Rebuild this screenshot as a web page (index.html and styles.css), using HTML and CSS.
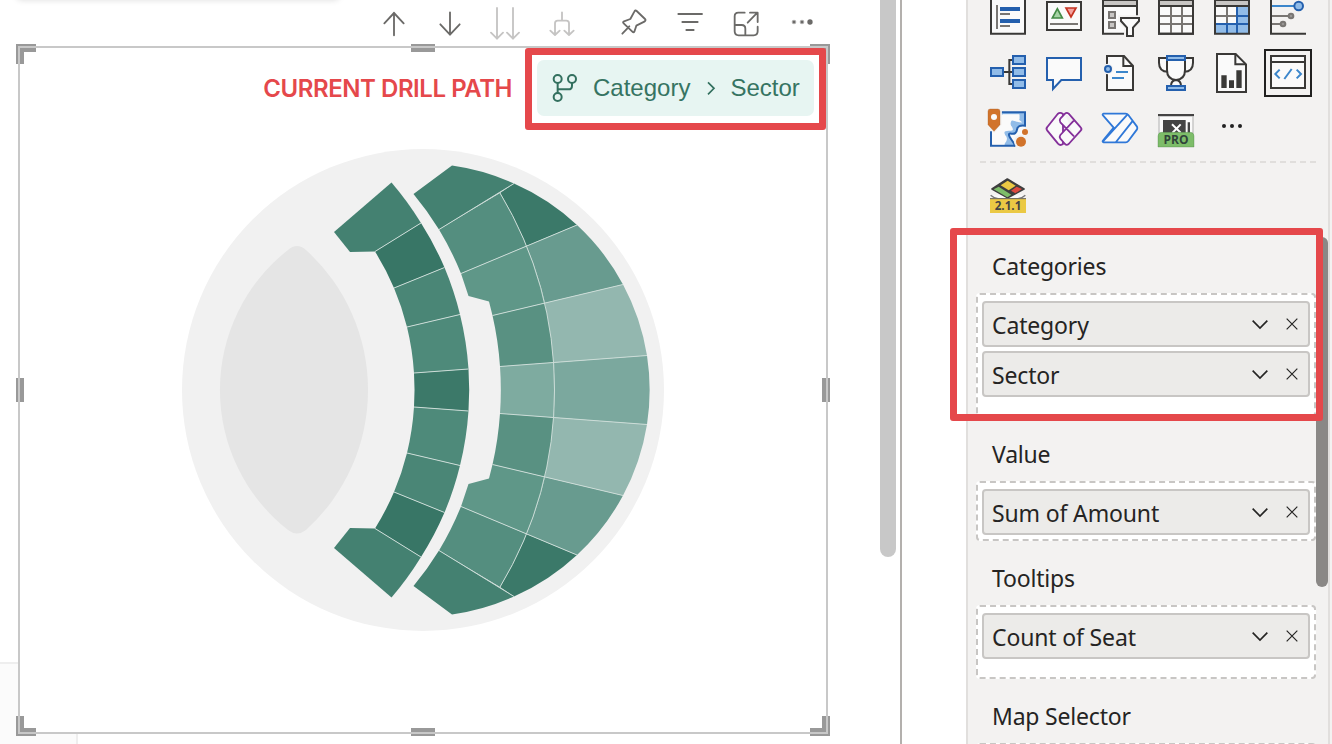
FILE: index.html
```html
<!DOCTYPE html>
<html lang="en">
<head>
<meta charset="utf-8">
<title>Seat map report</title>
<link rel="stylesheet" href="styles.css">
</head>
<body>
<div class="app">
  <main class="canvas">
    <div class="card-above"></div>
    <div class="card-behind"></div>
    <div class="toolbar">
      <svg class="tool" viewBox="18 0 168 132"><path d="M102 106V38M73 70l29-31 29 31"/></svg>
      <svg class="tool" viewBox="186 0 168 132"><path d="M270 37v67M241 73l29 31 29-31"/></svg>
      <svg class="tool off" viewBox="354 0 168 132"><path d="M411 24v92M393 98l18 18 18-18M459 24v92M441 98l18 18 18-18"/></svg>
      <svg class="tool off" viewBox="522 0 168 132"><path d="M606 37v25M585 104V70q0-8 8-8h26q8 0 8 8v34M571 92l14 13 14-13M613 92l14 13 14-13"/></svg>
      <svg class="tool spaced" viewBox="738 0 168 132"><path d="M787 101l21-22M830 33l25 24q4 4-2 8l-24 12-6 18q-2 4-6 0l-26-25q-4-4 1-6l19-7 12-22q3-6 7-2z"/></svg>
      <svg class="tool" viewBox="906 0 168 132"><path d="M955 42h71M967 66h46M979 90h22"/></svg>
      <svg class="tool" viewBox="1074 0 168 132"><path d="M1154 38h-19q-11 0-11 11v45q0 12 12 12h45q12 0 12-12V80M1124 75h21q11 0 11 11v20M1163 68l29-30M1170 38h23v28"/></svg>
      <svg class="tool dots" viewBox="1242 0 168 132"><circle cx="1302" cy="66" r="7"/><circle cx="1326" cy="66" r="7"/><circle class="solid" cx="1302" cy="66" r="4"/><circle class="solid" cx="1326" cy="66" r="4"/><circle class="solid" cx="1350" cy="66" r="8"/></svg>
    </div>
    <section class="visual">
      <header class="drill">
        <span class="drill-title">CURRENT DRILL PATH</span>
        <div class="chip">
          <svg class="branch" viewBox="574 216 84 96"><circle cx="594" cy="237" r="12"/><circle cx="637" cy="237" r="12"/><circle cx="594" cy="291" r="12"/><path d="M594 249v30M637 249v8q0 11-11 11h-32"/></svg>
          <span class="crumb">Category</span>
          <svg class="sep" viewBox="1038 240 30 48"><path d="M1044 247l18 18-18 18"/></svg>
          <span class="crumb">Sector</span>
        </div>
      </header>
      <svg class="seats" viewBox="20 116 806 616">
        <defs>
          <g id="half">
            <path fill="#448171" d="M391.5 182.5L334 232l16 20 25-.5 46-28.500A313.500 313.500 0 0 0 391.500 182.500z"/>
            <path fill="#387666" d="M375 251.500L421 223A313.500 313.500 0 0 1 444.500 267.500L394 288A265 265 0 0 0 375 251.500z"/>
            <path fill="#4a8676" d="M394 288L444.500 267.500A313.500 313.500 0 0 1 460 314.500L407 327A265 265 0 0 0 394 288z"/>
            <path fill="#4e8a7a" d="M407 327L460 314.500A313.500 313.500 0 0 1 468.500 369L414 373A265 265 0 0 0 407 327z"/>
            <path fill="#448171" d="M452 165.500L413.500 194A311 311 0 0 1 439 229.500L514 183.500A226 226 0 0 0 452 165.500z"/>
            <path fill="#3b7969" d="M500 193L514 183.500A226 226 0 0 1 577 225L526.500 246A380 380 0 0 0 500 193z"/>
            <path fill="#548e7f" d="M439 229.500L500 193A380 380 0 0 1 526.500 246L461 273.500A311 311 0 0 0 439 229.500z"/>
            <path fill="#689b8f" d="M526.500 246L577 225A226 226 0 0 1 623 284.500L545 303A380 380 0 0 0 526.500 246z"/>
            <path fill="#5f9788" d="M461 273.500L526.500 246A380 380 0 0 1 545 303L492.500 315.500 489 301.500 468.500 296z"/>
            <path fill="#93b7af" d="M545 303L623 284.500A226 226 0 0 1 647 355.500L553.500 362.500A380 380 0 0 0 545 303z"/>
            <path fill="#599182" d="M492.500 315.500L545 303A380 380 0 0 1 553.500 362.500L500 366.500A327 327 0 0 0 492.500 315.500z"/>
            <path class="divider" d="M375 251.500L421 223M394 288L444.500 267.500M407 327L460 314.500M414 373L468.500 369M439 229.500L514 183.500M461 273.500L577 225M492.500 315.500L623 284.500M500 366.500L647 355.500M500 193A380 380 0 0 1 554.500 390"/>
          </g>
        </defs>
        <circle cx="423" cy="390" r="241" fill="#f1f1f1"/>
        <path fill="#e5e5e5" d="M288 250Q297 242 306 250A189 189 0 0 1 306 530Q297 537 288 530A178 178 0 0 1 288 250z"/>
        <path fill="#3c7969" d="M414 373L468.500 369A313.500 313.500 0 0 1 468.500 411L414 407A265 265 0 0 0 414 373z"/>
        <path fill="#7eaba0" d="M500 366.500L553.500 362.500A380 380 0 0 1 553.500 417.500L500 413.500A327 327 0 0 0 500 366.500z"/>
        <path fill="#7ba89e" d="M553.500 362.500L647 355.500A226 226 0 0 1 647 424.500L553.500 417.500A380 380 0 0 0 553.500 362.500z"/>
        <use href="#half"/>
        <use href="#half" transform="translate(0 780) scale(1 -1)"/>
      </svg>
      <svg class="handles" viewBox="16 44 814 692">
        <path class="grip" d="M16 44h20v8H24v12h-8zM830 44h-20v8h12v12h8zM16 736h20v-8H24v-12h-8zM830 736h-20v-8h12v-12h8zM411 44h24v8h-24zM411 728h24v8h-24zM16 378h8v24h-8zM822 378h8v24h-8z"/>
        <path class="outline" d="M19 47h808v686H19z"/>
      </svg>
      <div class="mark mark-drill"></div>
    </section>
    <div class="page-scroll"></div>
  </main>

  <aside class="panel">
    <div class="gallery">
      <svg class="viz" viewBox="30 -33 168 168"><path class="ink paper" d="M63-6h102v107H63z"/><path class="gray" d="M81 15v72M90 42h30M90 78h30"/><path fill="#2460ae" d="M90 21h60v12H90zM90 57h60v12H90z"/></svg>
      <svg class="viz" viewBox="198 -33 168 168"><path class="ink paper" d="M231 6h102v84H231z"/><path fill="#a6d3a5" stroke="#438a46" stroke-width="5" d="M262 26l15 28h-30z"/><path fill="#f4a3a0" stroke="#c43322" stroke-width="5" d="M288 24h30l-15 27z"/><path class="gray" d="M240 72h84"/></svg>
      <svg class="viz" viewBox="366 -33 168 168"><path class="ink paper" d="M399 0h102v101H399z"/><path fill="#c8c6c4" d="M402 3h96v12h-96z"/><path class="ink" d="M399 18h102"/><path class="gray" fill="#c8c6c4" d="M417 36h18v18h-18zM417 66h18v18h-18z"/><path fill="#f3f2f1" d="M444 46h72v72h-54V84l-18-20z"/><path class="ink paper" d="M453 54h54v9l-18 20v25h-18V83l-18-20z"/></svg>
      <svg class="viz" viewBox="534 -33 168 168"><path class="ink paper" d="M567 0h102v101H567z"/><path fill="#c8c6c4" d="M570 3h96v12h-96z"/><path class="gray" d="M603 21v78M636 21v78M570 48h96M570 72h96"/><path class="ink" d="M567 0h102v101H567zM567 18h102"/></svg>
      <svg class="viz" viewBox="702 -33 168 168"><path class="paper" d="M735 0h102v101H735z"/><path fill="#c8c6c4" d="M738 3h96v12h-96z"/><path class="gray" d="M771 21v50M738 48h64"/><path fill="#91bce8" d="M738 72h64V21h33v78h-97z"/><path class="blue" d="M738 72h96M801 21v78M771 72v27M801 48h33"/><path class="ink" d="M735 0h102v101H735zM735 18h102"/></svg>
      <svg class="viz" viewBox="870 -33 168 168"><path class="ink" d="M903-4v105h105"/><path class="sky" d="M906 18h70"/><path class="gray" d="M906 48h50M906 72h27"/><circle cx="986" cy="18" r="13" class="blue light"/><circle cx="963" cy="48" r="7" class="gray" fill="#979593"/><circle cx="939" cy="72" r="7" class="gray" fill="#979593"/></svg>

      <svg class="viz" viewBox="30 135 168 168"><path class="ink" d="M100 216h27M127 180h-9v72h9"/><path class="blue light" d="M63 204h36v24H63zM129 168h36v24h-36zM129 204h36v24h-36zM129 240h36v24h-36z"/></svg>
      <svg class="viz" viewBox="198 135 168 168"><path class="blue paper" d="M231 174h102v66h-59l-25 27v-27h-18z"/></svg>
      <svg class="viz" viewBox="366 135 168 168"><path class="ink paper" d="M411 192v-24h51l27 30v72h-78v-50"/><path class="ink" d="M460 168v30h29"/><path class="sky" d="M438 216h36M426 234h36"/><circle cx="414" cy="207" r="16" fill="#f3f2f1"/><circle cx="414" cy="207" r="9" class="blue light"/></svg>
      <svg class="viz" viewBox="534 135 168 168"><path class="ink paper" d="M591 174h-24v14q0 27 27 27M645 174h24v14q0 27-27 27"/><path class="ink paper" d="M591 174v36q0 28 27 30 27-2 27-30v-36zM603 258q0-17 15-18 15 1 15 18"/><path class="blue light" d="M591 168h54v12h-54zM591 258h54v12h-54z"/></svg>
      <svg class="viz" viewBox="702 135 168 168"><path class="ink paper" d="M741 162h56l31 31v83h-87z"/><path class="ink" d="M796 162v31h32"/><path fill="#3a3937" d="M754 226h16v38h-16zM777 241h15v23h-15zM799 211h16v53h-16z"/></svg>
      <svg class="viz" viewBox="870 135 168 168"><path class="frame" d="M885 150h138v138H885z"/><path class="ink paper" d="M903 168h102v96H903zM903 186h102"/><path class="sky" d="M929 209l-13 13 13 13M980 209l13 13-13 13M965 207l-22 30"/></svg>

      <svg class="viz" viewBox="30 3 168 168"><path class="paper" d="M63 37h102v99H63z"/><path fill="#91bce8" d="M95 38h70v39q-22-3-24 12t-17 12 1 19 5 17H106q-8-10-3-18t1-18 15-9 2-18 15-10 12-4V44H95z"/><path class="blue" d="M95 37h70v40q-22-3-24 12t-17 12 1 19 5 17H63V94"/><path fill="#fafafa" d="M98 43h50v14q-20-2-24 6t-1 14-14 12-4 16-2 28H68V96l10-12 16-14z"/><path fill="#f3f2f1" d="M88 30h7v44L72 99 60 88z"/><path fill="#d1732b" stroke="#a85c24" stroke-width="1" d="M54 34q0-7 7-7h22q7 0 7 7v40L72 94 54 74z"/><circle cx="72" cy="51" r="9" fill="#fafafa"/><circle cx="165" cy="96" r="9" fill="#d1732b"/><circle cx="153" cy="125" r="21" fill="#f3f2f1"/><circle cx="153" cy="125" r="15" fill="#d1732b"/></svg>
      <svg class="viz purple" viewBox="198 3 168 168"><path d="M279 42q-9-7-16 0l-31 39q-5 5 0 11l32 39q7 7 15 1z"/><path d="M285 41q5-5 11 0l36 41q5 5 0 10l-36 40q-6 5-11 0l-14-16q-4-5 0-11l41-44M285 41l-14 15q-4 5 0 11l41 42"/></svg>
      <svg class="viz flow" viewBox="366 3 168 168"><path d="M401 41h66q5 0 8 4l26 35q2 4 0 8l-26 35q-3 4-8 4h-66q-5-1-2-5l32-39-32-37q-3-4 2-5zM399 124l73-80M438 126l49-62"/></svg>
      <svg class="viz" viewBox="534 3 168 168"><path fill="#fafafa" d="M565 45h106v60H565z"/><path fill="#444" d="M564 42h108v7H564zM579 60h68v42h-68zM653 67h7v40h-7z"/><path stroke="#888" stroke-width="2" d="M567 50v50M669 50v50"/><path stroke="#fff" stroke-width="6" d="M606 73l26 25M632 73l-25 26"/><path fill="#7dbd69" stroke="#467b43" stroke-width="1" d="M564 141v-33q0-11 11-11h86q11 0 11 11v33z"/><text class="pro" x="618" y="133">PRO</text></svg>
      <svg class="viz" viewBox="702 3 168 168"><g fill="#222"><circle cx="762" cy="78" r="6"/><circle cx="786" cy="78" r="6"/><circle cx="810" cy="78" r="6"/></g></svg>
    </div>
    <svg class="rule" viewBox="0 0 336 2"><path d="M0 1h336"/></svg>
    <div class="custom">
      <svg class="viz" viewBox="30 201 168 168"><path d="M62 286q8 8 22 10h60q14-2 22-10" fill="#fafafa" stroke="#777" stroke-width="4"/><path d="M112 237l50 30-49 26-47-26z" fill="#3e3e3e" stroke="#3e3e3e" stroke-width="5" stroke-linejoin="round"/><path fill="#ebc944" d="M113 242l24 15-21 14-24-15z"/><path fill="#7dbd69" d="M86 260l38 24-12 8-41-24z"/><path fill="#dc4a40" d="M140 260l16 7-20 13-13-8z"/><path fill="#ebc944" d="M60 295h108v44H60z"/><path stroke="#666" stroke-width="3" d="M60 296h108"/><text class="version" x="114" y="330">2.1.1</text></svg>
    </div>
    <div class="wells">
      <h2 class="well-name">Categories</h2>
      <div class="well roomy">
        <div class="field"><span>Category</span><svg class="acts" viewBox="930 285 150 54"><path d="M938 302l22 22 22-22"/><path class="thin" d="M1040 296l32 32M1072 296l-32 32"/></svg></div>
        <div class="field"><span>Sector</span><svg class="acts" viewBox="930 285 150 54"><path d="M938 302l22 22 22-22"/><path class="thin" d="M1040 296l32 32M1072 296l-32 32"/></svg></div>
      </div>
      <h2 class="well-name">Value</h2>
      <div class="well">
        <div class="field"><span>Sum of Amount</span><svg class="acts" viewBox="930 285 150 54"><path d="M938 302l22 22 22-22"/><path class="thin" d="M1040 296l32 32M1072 296l-32 32"/></svg></div>
      </div>
      <h2 class="well-name">Tooltips</h2>
      <div class="well roomy">
        <div class="field"><span>Count of Seat</span><svg class="acts" viewBox="930 285 150 54"><path d="M938 302l22 22 22-22"/><path class="thin" d="M1040 296l32 32M1072 296l-32 32"/></svg></div>
      </div>
      <h2 class="well-name">Map Selector</h2>
      <div class="well roomy"></div>
    </div>
    <div class="panel-edge"></div>
    <div class="panel-scroll"></div>
    <div class="mark mark-wells"></div>
  </aside>
</div>
</body>
</html>
```
FILE: styles.css
```css
* { box-sizing: border-box; }
body { margin: 0; background: #fff; overflow: hidden; }
svg { display: block; fill: none; flex: none; }
.app { display: flex; width: 1332px; height: 744px; overflow: hidden; }

.canvas { position: relative; width: 902px; height: 744px; flex: none; border-right: 2px solid #b3b0ad; }
.card-above { position: absolute; left: 16px; top: -20px; width: 324px; height: 20px; border-radius: 6px; box-shadow: 0 0 6px rgba(0,0,0,.14); }
.card-behind { position: absolute; left: -2px; top: 662px; width: 80px; height: 90px; background: #fbfbfb; border: 2px solid #eee; }

.toolbar { display: flex; height: 46px; padding-left: 366px; }
.tool { width: 56px; height: 44px; stroke: #6b6a68; stroke-width: 5.5; stroke-linecap: round; stroke-linejoin: round; }
.tool.off { stroke: #c5c4c3; }
.tool.spaced { margin-left: 16px; }
.tool.dots { fill: #b5b4b3; stroke: none; }
.tool.dots .solid { fill: #6b6a68; }

.visual { position: relative; width: 810px; height: 688px; margin-left: 18px; padding: 2px; background: #fff; }
.drill { display: flex; justify-content: flex-end; align-items: center; gap: 25px; height: 68px; padding: 12px 12px 0 0; }
.drill-title { padding-top: 2px; font: 600 24px/56px Inter, sans-serif; color: #e5484b; letter-spacing: -.45px; }
.chip { display: flex; align-items: center; width: 277px; height: 56px; padding-left: 14px; border-radius: 7px; background: #e7f5f2; }
.branch { width: 28px; height: 32px; stroke: #33705f; stroke-width: 6; }
.crumb { font: 24px/56px "Liberation Sans", sans-serif; color: #367462; }
.branch + .crumb { margin-left: 14px; }
.sep { width: 10px; height: 16px; margin: 0 14px 0 16px; stroke: #33705f; stroke-width: 5; }
.seats { width: 806px; height: 616px; }
.divider { stroke: #cbdcd7; stroke-width: 1; }
.handles { position: absolute; left: -2px; top: -2px; width: 814px; height: 692px; }
.grip { fill: #999; }
.outline { stroke: #c8c8c8; stroke-width: 2; }
.page-scroll { position: absolute; left: 880px; top: -20px; width: 16px; height: 577px; border-radius: 8px; background: #c8c8c8; }

.mark { position: absolute; border: 7px solid #e5484b; border-radius: 3px; }
.mark-drill { left: 506.5px; top: 2px; width: 301px; height: 81.500px; }
.mark-wells { left: -18px; top: 228px; width: 373px; height: 193px; }

.panel { position: relative; width: 366px; height: 744px; flex: none; margin-left: 64px; padding-left: 8px; background: #f3f2f1; border-left: 2px solid #e1dfdd; }
.gallery { display: grid; grid-template-columns: repeat(6, 56px); margin: -11px 0 4px 4px; }
.viz { width: 56px; height: 56px; }
.ink { stroke: #3a3937; stroke-width: 6; }
.frame { stroke: #212120; stroke-width: 6; fill: #f3f2f1; }
.gray { stroke: #797673; stroke-width: 6; }
.blue { stroke: #2460ae; stroke-width: 6; }
.sky { stroke: #3b86cb; stroke-width: 6; }
.paper { fill: #fafafa; }
.light { fill: #91bce8; }
.purple { stroke: #84309a; stroke-width: 5.5; fill: #fafafa; stroke-linejoin: round; }
.flow { stroke: #2f78d8; stroke-width: 5.5; fill: #fafafa; stroke-linejoin: round; }
.pro { font: 700 36px "Open Sans", sans-serif; fill: #30443a; text-anchor: middle; }
.version { font: 700 35px "Open Sans", sans-serif; fill: #444; text-anchor: middle; }
.rule { width: 336px; height: 2px; margin-left: 4px; stroke: #e0dedc; stroke-width: 2; stroke-dasharray: 6 4; }
.custom { height: 68px; padding: 4px 0 0 4px; }
.wells { width: 340px; margin-top: -2px; }
.well-name { margin: 0; height: 64px; padding: 4px 0 0 16px; font: 400 23px/66px "Noto Sans", sans-serif; letter-spacing: -.2px; color: #252423; }
.well { display: flex; flex-direction: column; gap: 4px; min-height: 60px; padding: 6px 4px 4px; border: 2px dashed #c8c6c4; border-radius: 4px; background: #fff; }
.roomy { padding-bottom: 18px; }
.field { display: flex; align-items: center; justify-content: space-between; height: 46px; padding: 0 8px; border: 2px solid #c8c6c4; border-radius: 4px; background: #ecebe9; font: 23px/42px "Noto Sans", sans-serif; letter-spacing: -.15px; color: #252423; }
.field span { padding-top: 2px; }
.acts { width: 50px; height: 18px; stroke: #252423; stroke-width: 5; }
.acts .thin { stroke-width: 3.5; }
.panel-edge { position: absolute; left: 360px; top: -2px; width: 2px; height: 750px; background: #e1dfdd; }
.panel-scroll { position: absolute; left: 348px; top: 237px; width: 12px; height: 350px; border-radius: 6px; background: #8a8886; }
```
